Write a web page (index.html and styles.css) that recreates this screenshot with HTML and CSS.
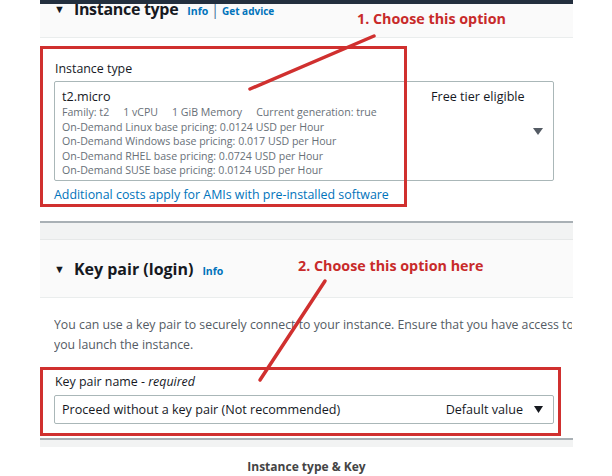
FILE: index.html
```html
<!DOCTYPE html>
<html lang="en">
<head>
<meta charset="utf-8">
<title>Instance type &amp; Key</title>
<link rel="stylesheet" href="styles.css">
</head>
<body>
<div class="page">
  <div class="topbar"></div>
  <section class="panel first">
    <div class="panel-head clipped">
      <h2 class="title big"><span class="caret">▼</span>Instance type <span class="links"><a class="link">Info</a><span class="pipe">|</span><a class="link">Get advice</a></span></h2>
    </div>
    <div class="panel-body body1">
      <div class="label">Instance type</div>
      <div class="select tall">
        <div class="sel-main">
          <div class="sel-value">t2.micro</div>
          <div class="meta"><span>Family: t2</span><span>1 vCPU</span><span>1 GiB Memory</span><span>Current generation: true</span></div>
          <div class="meta">On-Demand Linux base pricing: 0.0124 USD per Hour</div>
          <div class="meta">On-Demand Windows base pricing: 0.017 USD per Hour</div>
          <div class="meta">On-Demand RHEL base pricing: 0.0724 USD per Hour</div>
          <div class="meta">On-Demand SUSE base pricing: 0.0124 USD per Hour</div>
        </div>
        <div class="sel-side">Free tier eligible</div>
        <svg class="arrow" width="10" height="7" viewBox="0 0 10 7"><path d="M0 0H10L5 7Z" fill="#545b64"/></svg>
      </div>
      <a class="link-text">Additional costs apply for AMIs with pre-installed software</a>
    </div>
  </section>
  <div class="band"></div>
  <section class="panel second">
    <div class="panel-head head2">
      <h2 class="title"><span class="caret">▼</span>Key pair (login) <a class="link small">Info</a></h2>
    </div>
    <div class="panel-body body2">
      <div class="desc">
        <span class="desc-line">You can use a key pair to securely connect to your instance. Ensure that you have access to the selected key pair before</span>
        <span class="desc-line">you launch the instance.</span>
      </div>
      <div class="label">Key pair name - <i>required</i></div>
      <div class="select short">
        <div class="sel-value">Proceed without a key pair (Not recommended)</div>
        <div class="sel-right">Default value <svg class="arrow-inline" width="9" height="7" viewBox="0 0 9 7"><path d="M0 0H9L4.5 7Z" fill="#16191f"/></svg></div>
      </div>
    </div>
  </section>
  <div class="band small"></div>
  <div class="caption">Instance type &amp; Key</div>
</div>

<div class="annot box1"></div>
<div class="annot box2"></div>
<svg class="annot lines" width="612" height="476" viewBox="0 0 612 476">
  <line x1="374" y1="36" x2="250" y2="89" stroke="#d0302f" stroke-width="3.5" stroke-linecap="round"/>
  <line x1="325" y1="281" x2="260" y2="380" stroke="#d0302f" stroke-width="3.5" stroke-linecap="round"/>
</svg>
<div class="annot note note1">1. Choose this option</div>
<div class="annot note note2">2. Choose this option here</div>
</body>
</html>
```

FILE: styles.css
```css
* { box-sizing: border-box; }
html, body { margin: 0; padding: 0; background: #fff; }
body {
  position: relative;
  width: 612px;
  height: 476px;
  overflow: hidden;
  font-family: "Open Sans", "Noto Sans", sans-serif;
  color: #16191f;
}
.page {
  margin-left: 40px;
  width: 533px;
}
.topbar {
  height: 4px;
  background: #232f3e;
  position: relative;
  z-index: 2;
}
.panel-head {
  background: #fafafa;
  border-bottom: 1px solid #eaeded;
}
.clipped {
  height: 34px;
  overflow: hidden;
}
.title {
  margin: 0;
  font-weight: 700;
  display: flex;
  align-items: baseline;
  padding-left: 14px;
  white-space: nowrap;
}
.title.big {
  font-size: 16px;
  line-height: 20px;
  margin-top: -5px;
  letter-spacing: -0.3px;
}
.caret {
  font-size: 11px;
  margin-right: 9px;
  position: relative;
  top: -2px;
  letter-spacing: 0;
}
.big .caret { top: -2px; }
.links {
  display: inline-flex;
  align-items: baseline;
  margin-left: 9px;
  letter-spacing: 0;
}
.link {
  color: #0073bb;
  font-size: 10.5px;
  font-weight: 700;
}
.links .link + .pipe + .link { font-size: 10px; }
.pipe {
  color: #3d6f96;
  font-size: 14px;
  font-weight: 400;
  margin: 0 3px 0 3px;
}
.panel-body { padding-left: 14px; }
.body1 {
  padding-top: 23px;
  height: 185px;
  border-bottom: 2px solid #a9b0b5;
}
.label {
  font-size: 12.4px;
  line-height: 16px;
  padding-left: 1px;
}
.body1 .label { margin-bottom: 4px; }
.select {
  width: 500px;
  border: 1px solid #aab7b8;
  border-radius: 2px;
  display: flex;
  position: relative;
  background: #fff;
}
.tall {
  height: 100px;
  padding: 6px 0 0 7px;
}
.sel-main { flex: 1; }
.sel-value {
  font-size: 12.6px;
  line-height: 18px;
}
.tall .sel-value { margin-bottom: -1px; }
.meta {
  font-size: 10.6px;
  line-height: 14.5px;
  color: #687078;
  display: flex;
  gap: 14px;
  white-space: nowrap;
}
.sel-side {
  width: 122px;
  font-size: 12.6px;
  line-height: 18px;
  white-space: nowrap;
}
.arrow {
  position: absolute;
  right: 10px;
  top: 46px;
}
.link-text {
  display: block;
  margin-top: 5px;
  color: #0073bb;
  font-size: 12.4px;
  line-height: 18px;
}
.band {
  height: 17px;
  background: #f2f3f3;
  border-bottom: 1px solid #e6e8e8;
}
.band.small {
  height: 7px;
  border-bottom: none;
}
.head2 {
  height: 58px;
  display: flex;
  align-items: center;
  padding-top: 2px;
}
.head2 .title {
  font-size: 16px;
  line-height: 20px;
}
.link.small { margin-left: 9px; font-size: 10.5px; }
.body2 {
  padding-top: 17px;
  height: 142px;
  border-bottom: 2px solid #a9b0b5;
}
.desc {
  font-size: 12.3px;
  line-height: 20px;
  color: #545b64;
  width: 518px;
  overflow: hidden;
}
.desc-line {
  display: block;
  white-space: nowrap;
}
.body2 .label { margin-top: 19px; margin-bottom: 5px; }
.short {
  height: 29px;
  align-items: center;
  justify-content: space-between;
  padding: 0 10px 0 7px;
}
.short .sel-value { font-size: 12.6px; }
.sel-right {
  display: flex;
  align-items: center;
  gap: 11px;
  font-size: 12.6px;
  color: #16191f;
}
.caption {
  text-align: center;
  font-size: 12px;
  font-weight: 700;
  color: #444;
  margin-top: 11px;
}
.annot { position: absolute; z-index: 5; }
.box1 {
  left: 40px;
  top: 46px;
  width: 367px;
  height: 161px;
  border: 3.5px solid #d0302f;
}
.box2 {
  left: 40px;
  top: 367px;
  width: 521px;
  height: 69px;
  border: 3.5px solid #d0302f;
}
.lines { left: 0; top: 0; pointer-events: none; }
.note {
  color: #c82a2a;
  font-weight: 700;
  font-size: 14.3px;
  line-height: 20px;
  white-space: nowrap;
}
.note1 { left: 357px; top: 9px; }
.note2 { left: 298px; top: 256px; }
```
